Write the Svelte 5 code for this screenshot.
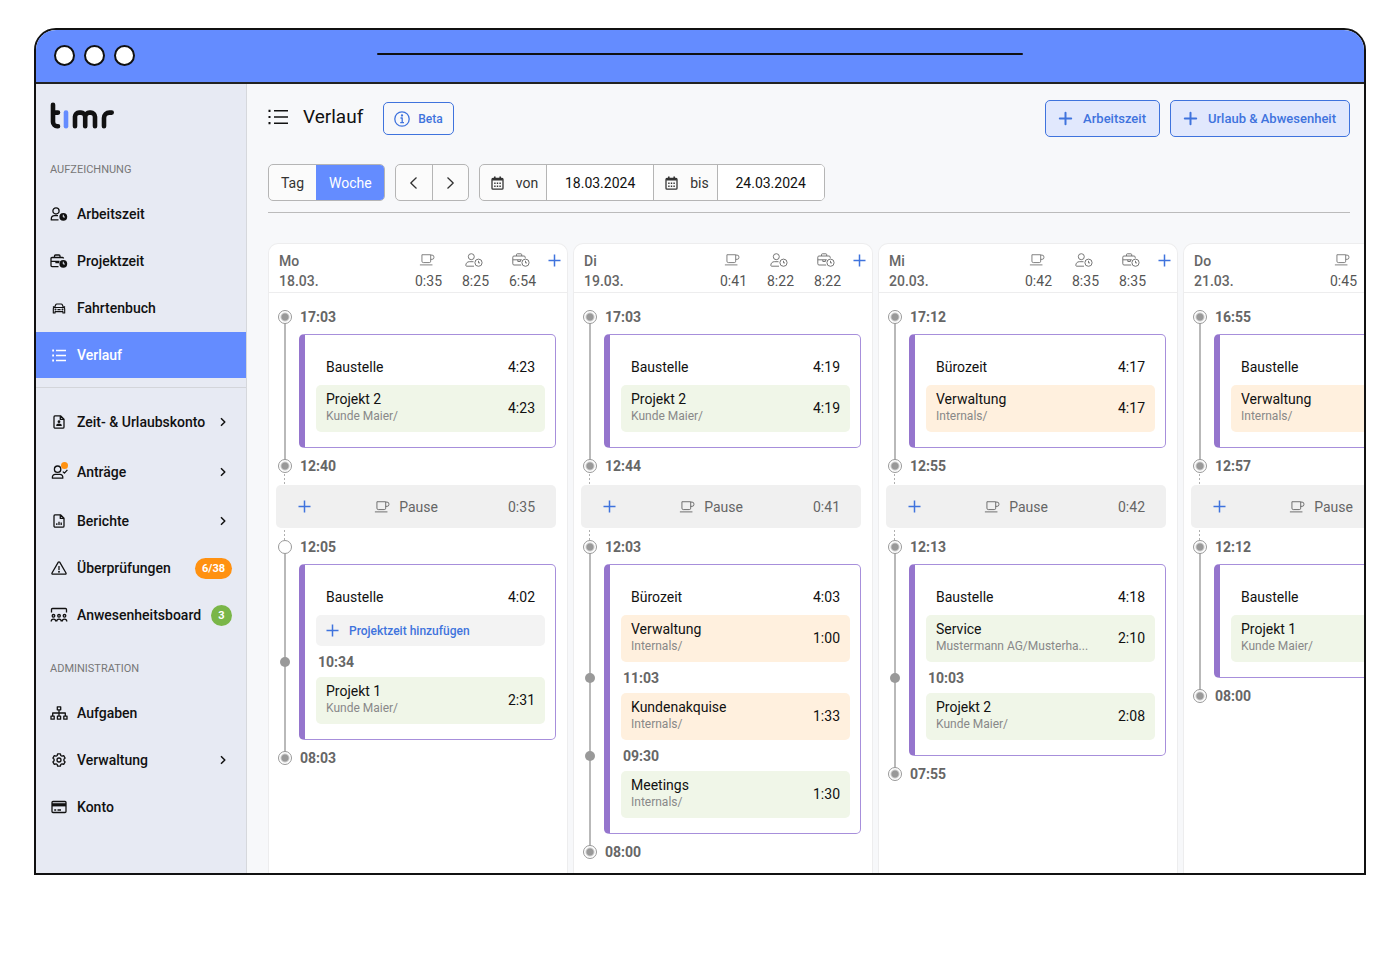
<script lang="ts">
	type Booking = { time?: string; name?: string; customer?: string; duration?: string; tone?: string };
	type Session = { name: string; duration?: string; end: string; bookings: Booking[] };

	interface Day {
		label: string;
		date: string;
		stats: { icon: string; value: string }[];
		start: string;
		openStart?: boolean;
		sessions: Session[];
		pause: { duration?: string; resume: string };
	}

	const recording = [
		{ icon: 'user-clock', label: 'Arbeitszeit' },
		{ icon: 'case-clock', label: 'Projektzeit' },
		{ icon: 'car', label: 'Fahrtenbuch' },
		{ icon: 'list', label: 'Verlauf', active: true }
	];

	const overview = [
		{ icon: 'file-user', label: 'Zeit- & Urlaubskonto', expandable: true },
		{ icon: 'user-check', label: 'Anträge', expandable: true, dot: true },
		{ icon: 'file-chart', label: 'Berichte', expandable: true },
		{ icon: 'warning', label: 'Überprüfungen', badge: '6/38', badgeTone: 'orange' },
		{ icon: 'board', label: 'Anwesenheitsboard', badge: '3', badgeTone: 'green' }
	];

	const administration = [
		{ icon: 'sitemap', label: 'Aufgaben' },
		{ icon: 'gear', label: 'Verwaltung', expandable: true },
		{ icon: 'card', label: 'Konto' }
	];

	const days: Day[] = [
		{
			label: 'Mo',
			date: '18.03.',
			stats: [
				{ icon: 'cup', value: '0:35' },
				{ icon: 'user-clock-light', value: '8:25' },
				{ icon: 'case-clock-light', value: '6:54' }
			],
			start: '17:03',
			openStart: true,
			pause: { duration: '0:35', resume: '12:05' },
			sessions: [
				{
					name: 'Baustelle',
					duration: '4:23',
					end: '12:40',
					bookings: [{ name: 'Projekt 2', customer: 'Kunde Maier/', duration: '4:23', tone: 'green' }]
				},
				{
					name: 'Baustelle',
					duration: '4:02',
					end: '08:03',
					bookings: [
						{},
						{ time: '10:34', name: 'Projekt 1', customer: 'Kunde Maier/', duration: '2:31', tone: 'green' }
					]
				}
			]
		},
		{
			label: 'Di',
			date: '19.03.',
			stats: [
				{ icon: 'cup', value: '0:41' },
				{ icon: 'user-clock-light', value: '8:22' },
				{ icon: 'case-clock-light', value: '8:22' }
			],
			start: '17:03',
			pause: { duration: '0:41', resume: '12:03' },
			sessions: [
				{
					name: 'Baustelle',
					duration: '4:19',
					end: '12:44',
					bookings: [{ name: 'Projekt 2', customer: 'Kunde Maier/', duration: '4:19', tone: 'green' }]
				},
				{
					name: 'Bürozeit',
					duration: '4:03',
					end: '08:00',
					bookings: [
						{ name: 'Verwaltung', customer: 'Internals/', duration: '1:00', tone: 'orange' },
						{ time: '11:03', name: 'Kundenakquise', customer: 'Internals/', duration: '1:33', tone: 'orange' },
						{ time: '09:30', name: 'Meetings', customer: 'Internals/', duration: '1:30', tone: 'green' }
					]
				}
			]
		},
		{
			label: 'Mi',
			date: '20.03.',
			stats: [
				{ icon: 'cup', value: '0:42' },
				{ icon: 'user-clock-light', value: '8:35' },
				{ icon: 'case-clock-light', value: '8:35' }
			],
			start: '17:12',
			pause: { duration: '0:42', resume: '12:13' },
			sessions: [
				{
					name: 'Bürozeit',
					duration: '4:17',
					end: '12:55',
					bookings: [{ name: 'Verwaltung', customer: 'Internals/', duration: '4:17', tone: 'orange' }]
				},
				{
					name: 'Baustelle',
					duration: '4:18',
					end: '07:55',
					bookings: [
						{ name: 'Service', customer: 'Mustermann AG/Musterha...', duration: '2:10', tone: 'green' },
						{ time: '10:03', name: 'Projekt 2', customer: 'Kunde Maier/', duration: '2:08', tone: 'green' }
					]
				}
			]
		},
		{
			label: 'Do',
			date: '21.03.',
			stats: [{ icon: 'cup', value: '0:45' }],
			start: '16:55',
			pause: { resume: '12:12' },
			sessions: [
				{
					name: 'Baustelle',
					end: '12:57',
					bookings: [{ name: 'Verwaltung', customer: 'Internals/', tone: 'orange' }]
				},
				{
					name: 'Baustelle',
					end: '08:00',
					bookings: [{ name: 'Projekt 1', customer: 'Kunde Maier/', tone: 'green' }]
				}
			]
		}
	];

	let range = $state('Woche');
	let from = $state('18.03.2024');
	let to = $state('24.03.2024');
</script>

{#snippet icon(name: string)}
	{#if name === 'user-clock'}
		<svg width="18" height="14" viewBox="0 0 18 14" class="line">
			<circle cx="6" cy="3.9" r="3.1" />
			<path d="M8.5 12.9H1.3V12c0-1.9 1.4-3.3 3.2-3.3H8" />
			<circle cx="13.3" cy="9.8" r="3.9" class="solid" />
			<path d="M13.3 7.7v2.3h1.6" class="cut" />
		</svg>
	{:else if name === 'case-clock'}
		<svg width="18" height="14" viewBox="0 0 18 14" class="line">
			<path d="M8.5 12.6H2a1 1 0 0 1-1-1V4.5a1 1 0 0 1 1-1h10.5a1 1 0 0 1 1 1M4.500 3.500V2a1 1 0 0 1 1-1H9a1 1 0 0 1 1 1v1.500M1 7.400h8.500M6 7.400v1.300h2.500V7.400" />
			<circle cx="13.3" cy="9.8" r="3.9" class="solid" />
			<path d="M13.3 7.7v2.3h1.6" class="cut" />
		</svg>
	{:else if name === 'car'}
		<svg width="14" height="13" viewBox="0 0 16 14" class="line">
			<path d="M3 5.8 4.200 2.800A1.500 1.500 0 0 1 5.600 1.900h4.800a1.500 1.500 0 0 1 1.400.9L13 5.800M3 5.800h10a1.500 1.500 0 0 1 1.500 1.500v4.900h-2V10.500h-9v1.700h-2V7.300A1.500 1.500 0 0 1 3 5.800ZM1 5.200h1.500M13.500 5.200H15M6.200 8.300h3.600" />
			<circle cx="4" cy="8.2" r=".5" />
			<circle cx="12" cy="8.2" r=".5" />
		</svg>
	{:else if name === 'list'}
		<svg width="14" height="14" viewBox="0 0 14 14" class="line">
			<path d="M4 2.500h10M4 7.500h10M4 12.500h10" />
			<path d="M.2 2.500h1.800M.2 7.500h1.800M.2 12.500h1.800" stroke-width="1.8" />
		</svg>
	{:else if name === 'file-user'}
		<svg width="12" height="14" viewBox="0 0 12 14" class="line">
			<path d="M2 .8h5.500L11 4.300V12a1.200 1.200 0 0 1-1.200 1.200H2.200A1.200 1.200 0 0 1 1 12V2A1.200 1.200 0 0 1 2 .8ZM7.300 1v3.400H11" />
			<circle cx="6" cy="6.700" r="1.400" class="solid" />
			<path d="M3.200 11c0-1.700 1.100-2.400 2.800-2.400s2.800.7 2.800 2.400Z" class="solid" />
		</svg>
	{:else if name === 'user-check'}
		<svg width="18" height="14" viewBox="0 0 18 14" class="line">
			<circle cx="7.6" cy="4.2" r="3.2" />
			<path d="M2.4 13.2h10.400c.3-2.200-.9-3.900-3-3.900H5.400c-2.100 0-3.300 1.700-3 3.900ZM12.800 6.600l1.600 1.500 3-3.200" />
		</svg>
	{:else if name === 'file-chart'}
		<svg width="12" height="14" viewBox="0 0 12 14" class="line">
			<path d="M2 .8h5.500L11 4.300V12a1.200 1.200 0 0 1-1.200 1.200H2.200A1.200 1.200 0 0 1 1 12V2A1.200 1.200 0 0 1 2 .8ZM7.300 1v3.400H11M3.800 11V9.300M6 11V7.800M8.200 11V8.500" />
		</svg>
	{:else if name === 'warning'}
		<svg width="16" height="14" viewBox="0 0 16 14" class="line">
			<path d="M7.3 1.2a.8.800 0 0 1 1.400 0L15 12a.8.800 0 0 1-.7 1.200H1.700A.8.800 0 0 1 1 12ZM8 5v4" />
			<circle cx="8" cy="10.8" r=".4" />
		</svg>
	{:else if name === 'board'}
		<svg width="18" height="14" viewBox="0 0 18 14" class="line">
			<path d="M1.5 4.5v-3a1 1 0 0 1 1-1h13a1 1 0 0 1 1 1v3" />
			<circle cx="3.5" cy="7.8" r="1.3" />
			<circle cx="9" cy="7.8" r="1.3" />
			<circle cx="14.5" cy="7.8" r="1.3" />
			<path d="M1.2 13.5c0-1.700.8-2.400 2.300-2.400s2.300.7 2.300 2.400M6.700 13.500c0-1.700.8-2.400 2.300-2.400s2.300.7 2.300 2.400M12.200 13.500c0-1.700.8-2.400 2.300-2.400s2.300.7 2.300 2.400" />
		</svg>
	{:else if name === 'sitemap'}
		<svg width="18" height="14" viewBox="0 0 18 14" class="line">
			<path d="M7.3.8h3.400v3H7.300ZM9 3.800v6M2.700 9.800V7h12.600v2.800M1 10.200h3.200v3H1ZM7.400 10.200h3.200v3H7.400ZM13.800 10.200H17v3h-3.200Z" />
		</svg>
	{:else if name === 'gear'}
		<svg width="14" height="14" viewBox="0 0 14 14" class="line">
			<path d="M5.600.8h2.800l.4 1.700 1.200.7 1.700-.5 1.400 2.400L11.900 6.300v1.400l1.200 1.200-1.400 2.400-1.700-.5-1.200.7-.4 1.700H5.600l-.4-1.700-1.200-.7-1.700.5L.9 8.900l1.200-1.200V6.300L.9 5.100l1.400-2.400 1.700.5 1.200-.7Z" />
			<circle cx="7" cy="7" r="2" />
		</svg>
	{:else if name === 'card'}
		<svg width="16" height="14" viewBox="0 0 16 14" class="line">
			<rect x="1" y="1.5" width="14" height="11" rx="1" />
			<path d="M1 3.200h14v3.200H1Z" class="solid" />
			<path d="M3.200 10h2M6.500 10h3.500" />
		</svg>
	{:else if name === 'cup'}
		<svg width="16" height="12" viewBox="0 0 17 13" class="line thin">
			<path d="M3 .8h9.500v7a1.500 1.500 0 0 1-1.500 1.500H4.500A1.500 1.500 0 0 1 3 7.800ZM12.500 1.200H14a2 2 0 0 1 2 2v.6a2 2 0 0 1-2 2h-1.500M.8 11.800h13.600" />
		</svg>
	{:else if name === 'user-clock-light'}
		<svg width="18" height="14" viewBox="0 0 18 14" class="line thin">
			<circle cx="6.3" cy="3.7" r="3" />
			<path d="M9 13.2H1.600c-.5 0-.8-.3-.8-.8 0-2.200 1.500-3.700 3.500-3.700h4.200" />
			<circle cx="13.5" cy="9.7" r="3.6" />
			<path d="M13.5 7.8v2.100h1.500" />
		</svg>
	{:else if name === 'case-clock-light'}
		<svg width="18" height="14" viewBox="0 0 18 14" class="line thin">
			<path d="M9.2 12H2a1.200 1.200 0 0 1-1.200-1.200V4.200A1.200 1.200 0 0 1 2 3h10a1.200 1.200 0 0 1 1.200 1.200v1M4.500 3V1.600a.8.800 0 0 1 .8-.8h3.600a.8.800 0 0 1 .8.800V3M.8 6.800h9M5.800 6.800v1.700h2.600V6.800" />
			<circle cx="13.5" cy="9.7" r="3.6" />
			<path d="M13.5 7.8v2.100h1.500" />
		</svg>
	{:else if name === 'calendar'}
		<svg width="13" height="14" viewBox="0 0 13 14" class="line">
			<rect x="1" y="2.4" width="11" height="10.8" rx="1" />
			<path d="M1.2 3.5h10.600" stroke-width="2.2" />
			<path d="M3.8.4v2M9.200.4v2" stroke-width="1.6" />
			<path d="M3.200 7.300h1.400M5.800 7.300h1.400M8.400 7.300h1.400M3.200 10.200h1.400M5.800 10.200h1.400M8.400 10.200h1.400" stroke-width="1.5" />
		</svg>
	{:else if name === 'info'}
		<svg width="16" height="16" viewBox="0 0 16 16" class="line">
			<circle cx="8" cy="8" r="7.2" />
			<path d="M6.500 7h1.700v4.500M6.200 11.600h3.800" />
			<circle cx="8" cy="4.5" r=".5" />
		</svg>
	{:else if name === 'plus'}
		<svg width="13" height="13" viewBox="0 0 13 13" class="line">
			<path d="M6.500.5v12M.5 6.500h12" stroke-width="1.5" />
		</svg>
	{:else if name === 'plus-bold'}
		<svg width="13" height="13" viewBox="0 0 13 13" class="line">
			<path d="M6.500.8v11.400M.8 6.500h11.400" stroke-width="2" stroke-linecap="round" />
		</svg>
	{/if}
{/snippet}

{#snippet chevron(back: boolean)}
	<svg width="9" height="12" viewBox="0 0 9 12" class="line" aria-hidden="true">
		<path d={back ? 'M7.500.5 1.800 6l5.700 5.500' : 'M1.500.5 7.200 6l-5.700 5.500'} />
	</svg>
{/snippet}

{#snippet navList(items: any[])}
	<ul class="nav-list">
		{#each items as item (item.label)}
			<li>
				<a href="#top" class="nav-item" class:active={item.active} class:notified={item.dot}>
					<span class="nav-icon">
						{@render icon(item.icon)}
						{#if item.dot}<span class="nav-dot"></span>{/if}
					</span>
					<span class="nav-label">{item.label}</span>
					{#if item.expandable}
						<svg width="6" height="10" viewBox="0 0 6 10" class="line nav-chevron" aria-hidden="true">
							<path d="m1 1.200 3.800 3.800L1 8.800" stroke-width="1.5" />
						</svg>
					{/if}
					{#if item.badge}<span class="badge {item.badgeTone}">{item.badge}</span>{/if}
				</a>
			</li>
		{/each}
	</ul>
{/snippet}

{#snippet moment(time: string, open = false)}
	<div class="moment">
		<span class="marker" class:open></span>
		<time>{time}</time>
	</div>
{/snippet}

<div class="page">
	<div class="window">
		<div class="titlebar">
			<div class="lights"><span></span><span></span><span></span></div>
			<div class="address"></div>
		</div>

		<div class="body">
			<aside class="sidebar">
				<a href="#top" class="logo" aria-label="timr">
					<svg width="66" height="28" viewBox="0 0 66 28">
						<path d="M3 2.700v17.300a4.200 4.200 0 0 0 4.200 4.200H8M3 10.600h5" />
						<path d="M16 10.600v13.600" class="logo-accent" />
						<path d="M25 24.200V14.600a4 4 0 0 1 4-4h2a4.200 4.200 0 0 1 4.200 4.200v9.400M35.200 14.800a4.200 4.200 0 0 1 4.200-4.200h1.400a4.200 4.200 0 0 1 4.200 4.200v9.400" />
						<path d="M54 24.200v-8.200a5.400 5.400 0 0 1 5.400-5.400h2.300" />
					</svg>
				</a>

				<h2 class="nav-title">AUFZEICHNUNG</h2>
				{@render navList(recording)}
				<hr class="nav-rule" />
				{@render navList(overview)}
				<h2 class="nav-title later">ADMINISTRATION</h2>
				{@render navList(administration)}
			</aside>

			<main class="main">
				<header class="header">
					<div class="title">
						<svg width="20" height="16" viewBox="0 0 20 16" class="line" aria-hidden="true">
							<path d="M6 1.800h14M6 8h14M6 14.200h14" stroke-width="1.5" />
							<path d="M.5 1.800h2M.5 8h2M.5 14.200h2" stroke-width="2.2" />
						</svg>
						<h1>Verlauf</h1>
					</div>
					<button class="outline-button beta">{@render icon('info')}Beta</button>
					<div class="header-actions">
						<button class="outline-button filled">{@render icon('plus-bold')}Arbeitszeit</button>
						<button class="outline-button filled">{@render icon('plus-bold')}Urlaub &amp; Abwesenheit</button>
					</div>
				</header>

				<div class="toolbar">
					<div class="group">
						{#each ['Tag', 'Woche'] as option}
							<button class="segment" class:selected={range === option} onclick={() => (range = option)}>{option}</button>
						{/each}
					</div>
					<div class="group">
						<button class="step" aria-label="Zurück">{@render chevron(true)}</button>
						<button class="step" aria-label="Weiter">{@render chevron(false)}</button>
					</div>
					<div class="group">
						<label for="from">{@render icon('calendar')}von</label>
						<input id="from" type="text" bind:value={from} />
						<label for="to">{@render icon('calendar')}bis</label>
						<input id="to" type="text" bind:value={to} />
					</div>
				</div>

				<hr class="rule" />

				<div class="board">
					{#each days as day (day.date)}
						<section class="day">
							<header class="day-header">
								<h3>{day.label}<br />{day.date}</h3>
								<div class="stats">
									{#each day.stats as stat}
										<div class="stat">
											<span class="stat-icon">{@render icon(stat.icon)}</span>
											<span>{stat.value}</span>
										</div>
									{/each}
								</div>
								<button class="add" aria-label="Hinzufügen">{@render icon('plus')}</button>
							</header>

							<div class="timeline">
								{@render moment(day.start)}
								{#each day.sessions as session, i}
									<div class="track">
										<article class="card">
											<div class="card-head">
												<span>{session.name}</span>
												<span>{session.duration}</span>
											</div>
											{#each session.bookings as booking}
												{#if booking.time}
													<div class="split"><span class="split-dot"></span><time>{booking.time}</time></div>
												{/if}
												{#if booking.name}
													<div class="booking {booking.tone}">
														<div class="booking-text">
															<div>{booking.name}</div>
															<div class="customer">{booking.customer}</div>
														</div>
														<span>{booking.duration}</span>
													</div>
												{:else}
													<button class="add-booking">{@render icon('plus')}Projektzeit hinzufügen</button>
												{/if}
											{/each}
										</article>
									</div>
									{@render moment(session.end)}
									{#if i === 0}
										<div class="track break">
											<div class="pause">
												<button class="add" aria-label="Hinzufügen">{@render icon('plus')}</button>
												<span class="pause-label">{@render icon('cup')}Pause</span>
												<span class="pause-time">{day.pause.duration}</span>
											</div>
										</div>
										{@render moment(day.pause.resume, day.openStart)}
									{/if}
								{/each}
							</div>
						</section>
					{/each}
				</div>
			</main>
		</div>
	</div>
</div>

<style>
	:global(body) {
		background: #fff;
		font-family: Roboto, "Liberation Sans", sans-serif;
		font-size: 14px;
		line-height: 20px;
		color: #111;
	}

	.page,
	.page * {
		box-sizing: border-box;
	}

	.page {
		padding: 28px 34px;
	}

	h1,
	h2,
	h3,
	ul {
		margin: 0;
		padding: 0;
		list-style: none;
		font-weight: 400;
	}

	a {
		color: inherit;
		text-decoration: none;
	}

	button,
	input {
		font: inherit;
		color: inherit;
		margin: 0;
		padding: 0;
		border: 0;
		background: none;
	}

	button {
		cursor: pointer;
	}

	svg {
		display: block;
		flex: none;
		overflow: visible;
	}

	.line {
		fill: none;
		stroke: currentColor;
		stroke-width: 1.3;
		stroke-linejoin: round;
	}

	.thin {
		stroke-width: 1;
	}

	.solid {
		fill: currentColor;
		stroke: none;
	}

	.cut {
		stroke: #e7eaf3;
		stroke-width: 1;
	}

	.window {
		border: 2px solid #111;
		border-radius: 22px 22px 0 0;
		overflow: hidden;
	}

	.titlebar {
		display: grid;
		grid-template-columns: 1fr 50% 1fr;
		align-items: center;
		height: 54px;
		padding: 0 18px 2px;
		border-bottom: 2px solid #222;
		background: #648cff;
	}

	.lights {
		display: flex;
		gap: 9px;
	}

	.lights span {
		width: 21px;
		height: 21px;
		border: 2px solid #111;
		border-radius: 50%;
		background: #fff;
	}

	.address {
		height: 2px;
		margin-bottom: 2px;
		border-radius: 1px;
		background: #111;
	}

	.body {
		display: flex;
	}

	.sidebar {
		flex: none;
		width: 211px;
		padding-top: 18px;
		border-right: 1px solid #d6d8dc;
		background: #e7eaf3;
	}

	.logo {
		display: block;
		width: 66px;
		margin: 0 14px 30px;
	}

	.logo path {
		fill: none;
		stroke: #111;
		stroke-width: 4.6;
		stroke-linecap: round;
		stroke-linejoin: round;
	}

	.logo .logo-accent {
		stroke: #648cff;
	}

	.nav-title {
		margin: 0 14px 11px;
		font-size: 11px;
		line-height: 20px;
		color: #777;
	}

	.nav-title.later {
		margin-top: 21px;
	}

	.nav-list {
		display: flex;
		flex-direction: column;
		gap: 1px;
	}

	.nav-item {
		display: flex;
		align-items: center;
		gap: 9px;
		height: 46px;
		padding: 0 14px;
		font-weight: 500;
	}

	.nav-item.notified {
		height: 51px;
	}

	.nav-item.active {
		background: #648cff;
		color: #fff;
	}

	.nav-icon {
		position: relative;
		display: flex;
		justify-content: center;
		width: 18px;
	}

	.nav-dot {
		position: absolute;
		top: -3px;
		right: 0;
		width: 7px;
		height: 7px;
		border-radius: 50%;
		background: #ff9110;
	}

	.nav-label {
		flex: 1;
		white-space: nowrap;
	}

	.nav-chevron {
		margin-right: 6px;
	}

	.badge {
		min-width: 21px;
		padding: 0 7px;
		border-radius: 11px;
		font-size: 11px;
		font-weight: 700;
		line-height: 21px;
		text-align: center;
		color: #fff;
	}

	.badge.orange {
		background: #ff9110;
	}

	.badge.green {
		background: #7ab648;
	}

	.nav-rule {
		height: 1px;
		margin: 9px 0 11px;
		border: 0;
		background: #d3d5da;
	}

	.main {
		flex: 1;
		min-width: 0;
		padding: 16px 14px 0 21px;
		background: #f7f8fa;
	}

	.header {
		display: flex;
		align-items: center;
		gap: 20px;
	}

	.title {
		display: flex;
		align-items: center;
		gap: 15px;
		padding-bottom: 4px;
	}

	h1 {
		font-size: 19px;
		line-height: 24px;
	}

	.outline-button {
		display: flex;
		align-items: center;
		gap: 8px;
		height: 37px;
		padding: 0 13px;
		border: 1px solid #3f73dd;
		border-radius: 5px;
		font-size: 13px;
		font-weight: 500;
		color: #3f73dd;
	}

	.beta {
		height: 33px;
		padding: 0 10px;
		font-size: 12px;
	}

	.filled {
		gap: 11px;
		background: #e1e8fd;
	}

	.header-actions {
		display: flex;
		gap: 10px;
		margin-left: auto;
	}

	.toolbar {
		display: flex;
		gap: 10px;
		margin-top: 27px;
	}

	.group {
		display: flex;
		height: 37px;
		border: 1px solid #b5b5b5;
		border-radius: 5px;
		overflow: hidden;
		background: #fbfbfb;
		color: #333;
	}

	.group > * + * {
		border-left: 1px solid #b5b5b5;
	}

	.segment {
		padding: 0 12px;
	}

	.segment.selected {
		border-color: #648cff;
		background: #648cff;
		color: #fff;
	}

	.step {
		display: flex;
		align-items: center;
		justify-content: center;
		width: 36px;
	}

	.group label {
		display: flex;
		align-items: center;
		gap: 12px;
		padding: 0 8px 0 11px;
	}

	.group input {
		width: 107px;
		background: #fff;
		text-align: center;
		color: #111;
	}

	.rule {
		height: 1px;
		margin: 11px 0 30px;
		border: 0;
		background: #bbb;
	}

	.board {
		display: flex;
		gap: 5px;
		margin-right: -14px;
		overflow: hidden;
	}

	.day {
		flex: none;
		width: 300px;
		border: 1px solid #ededee;
		border-bottom: 0;
		border-radius: 10px 10px 0 0;
		background: #fff;
	}

	.day-header {
		display: flex;
		padding: 7px 5px 1px 10px;
		border-bottom: 1px solid #ededee;
		color: #555;
	}

	h3 {
		flex: 1;
		font-size: 14px;
		font-weight: 500;
		color: #666;
	}

	.stats {
		display: grid;
		grid-template-columns: repeat(3, 47px);
	}

	.stat {
		text-align: center;
	}

	.stat-icon {
		display: flex;
		align-items: center;
		justify-content: center;
		height: 20px;
		padding: 0 4px 2px 0;
		color: #777;
	}

	.add {
		display: flex;
		align-items: center;
		justify-content: center;
		height: 20px;
		color: #3f73dd;
	}

	.day-header .add {
		width: 16px;
		padding-bottom: 2px;
	}

	.timeline {
		padding: 14px 11px 11px 7px;
	}

	.moment {
		position: relative;
		z-index: 1;
		display: flex;
		align-items: center;
		gap: 8px;
		height: 20px;
		padding-left: 2px;
		font-weight: 700;
		color: #666;
	}

	.marker {
		width: 14px;
		height: 14px;
		border: 1px solid #999;
		border-radius: 50%;
		background: radial-gradient(circle, #999 3px, #fff 5px);
	}

	.marker.open {
		background: #fff;
	}

	/* the rail runs behind the markers of the neighbouring moments */
	.track {
		margin: -10px 0;
		padding: 17px 0 18px 23px;
		background: linear-gradient(#b9b9b9, #b9b9b9) 8px 0 / 2px 100% no-repeat;
	}

	.track.break {
		padding: 19px 0;
		background: repeating-linear-gradient(#b0b0b0 0 2px, #fff 2px 4px) 8px 0 / 1px 100% no-repeat;
	}

	.card {
		padding: 22px 10px 15px 11px;
		border: 1px solid #a78fdb;
		border-left: 6px solid #9575cd;
		border-radius: 5px;
		background: #fff;
	}

	.card-head {
		display: flex;
		justify-content: space-between;
		padding: 0 10px 8px;
	}

	.booking {
		display: flex;
		align-items: center;
		justify-content: space-between;
		height: 47px;
		padding: 0 10px 2px;
		border-radius: 5px;
	}

	.booking.green {
		background: #f0f6e8;
	}

	.booking.orange {
		background: #fff0de;
	}

	.booking-text {
		line-height: 17px;
	}

	.customer {
		font-size: 12px;
		color: #888;
	}

	.split {
		display: flex;
		align-items: center;
		gap: 28px;
		height: 31px;
		margin-left: -36px;
		font-weight: 700;
		color: #666;
	}

	.split-dot {
		width: 10px;
		height: 10px;
		border-radius: 50%;
		background: #999;
	}

	.add-booking {
		display: flex;
		align-items: center;
		gap: 10px;
		width: 100%;
		height: 31px;
		padding: 0 10px;
		border-radius: 5px;
		background: #f3f3f3;
		font-size: 12px;
		font-weight: 500;
		color: #3f73dd;
	}

	.pause {
		display: grid;
		grid-template-columns: 56px 1fr 76px;
		align-items: center;
		height: 43px;
		border-radius: 5px;
		background: #f0f0f0;
		color: #666;
	}

	.pause-label {
		display: flex;
		align-items: center;
		justify-content: center;
		gap: 9px;
	}

	.pause-time {
		padding-right: 21px;
		text-align: right;
	}
</style>
